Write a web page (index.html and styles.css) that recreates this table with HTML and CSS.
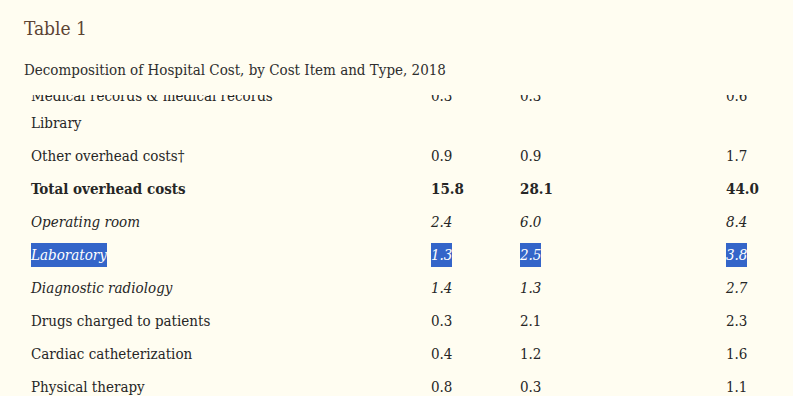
FILE: index.html
```html
<!DOCTYPE html>
<html lang="en">
<head>
<meta charset="utf-8">
<title>Table 1</title>
<link rel="stylesheet" href="styles.css">
</head>
<body>
<div class="page">
  <h2 class="table-title">Table 1</h2>
  <p class="table-caption">Decomposition of Hospital Cost, by Cost Item and Type, 2018</p>
  <div class="table-scroll">
    <table class="cost-table">
      <colgroup>
        <col class="c-label"><col class="c-num"><col class="c-gap"><col class="c-num">
      </colgroup>
      <tbody>
        <tr><td>Medical records &amp; medical records<br>Library</td><td>0.3</td><td>0.3</td><td>0.6</td></tr>
        <tr><td>Other overhead costs†</td><td>0.9</td><td>0.9</td><td>1.7</td></tr>
        <tr class="bold"><td>Total overhead costs</td><td>15.8</td><td>28.1</td><td>44.0</td></tr>
        <tr class="ital"><td>Operating room</td><td>2.4</td><td>6.0</td><td>8.4</td></tr>
        <tr class="ital"><td><span class="sel">Laboratory</span></td><td><span class="sel">1.3</span></td><td><span class="sel">2.5</span></td><td><span class="sel">3.8</span></td></tr>
        <tr class="ital"><td>Diagnostic radiology</td><td>1.4</td><td>1.3</td><td>2.7</td></tr>
        <tr><td>Drugs charged to patients</td><td>0.3</td><td>2.1</td><td>2.3</td></tr>
        <tr><td>Cardiac catheterization</td><td>0.4</td><td>1.2</td><td>1.6</td></tr>
        <tr><td>Physical therapy</td><td>0.8</td><td>0.3</td><td>1.1</td></tr>
      </tbody>
    </table>
  </div>
</div>
</body>
</html>
```

FILE: styles.css
```css
html, body {
  margin: 0;
  padding: 0;
  background: #fffdf1;
}
body {
  font-family: "DejaVu Serif Condensed", "DejaVu Serif", serif;
  color: #262626;
  overflow: hidden;
}
.page {
  padding: 14px 0 0 24px;
}
.table-title {
  margin: 0;
  font-size: 19px;
  font-weight: normal;
  line-height: 28px;
  color: #5c4434;
}
.table-caption {
  margin: 14px 0 0 0;
  font-size: 15px;
  line-height: 28px;
  color: #2e2e2e;
}
.table-scroll {
  margin-top: 11px;
  height: 310px;
  overflow: hidden;
}
.cost-table {
  border-collapse: collapse;
  margin-top: -15px;
  font-size: 15px;
  line-height: 27px;
  table-layout: fixed;
  width: 760px;
}
.c-label { width: 400px; }
.c-num { width: 89px; }
.c-gap { width: 206px; }
.cost-table td {
  padding: 3px 7px;
  vertical-align: top;
  white-space: nowrap;
}
.cost-table tr.bold td { font-weight: bold; }
.cost-table tr.ital td { font-style: italic; }
.sel {
  display: inline-block;
  background: #3465c9;
  color: #fff;
  line-height: 24px;
  vertical-align: top;
  margin-top: 1px;
}
```
